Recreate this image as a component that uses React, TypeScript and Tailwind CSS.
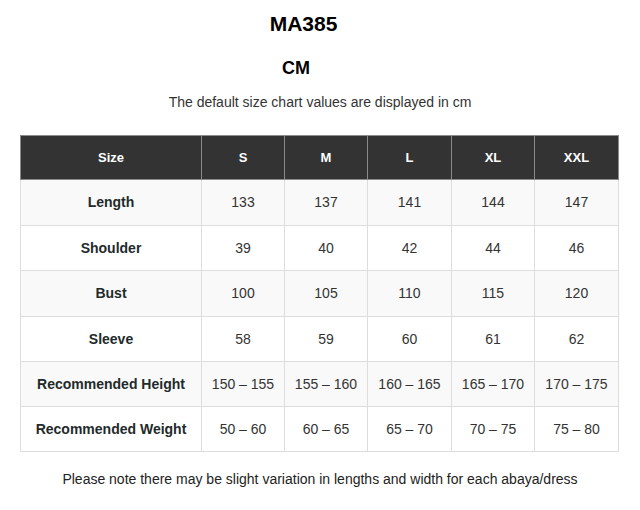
import React from "react";

const SIZES = ["S", "M", "L", "XL", "XXL"];

const ROWS = [
  { label: "Length", h: "h-[46px]", values: ["133", "137", "141", "144", "147"] },
  { label: "Shoulder", h: "h-[45px]", values: ["39", "40", "42", "44", "46"] },
  { label: "Bust", h: "h-[46px]", values: ["100", "105", "110", "115", "120"] },
  { label: "Sleeve", h: "h-[45px]", values: ["58", "59", "60", "61", "62"] },
  { label: "Recommended Height", h: "h-[45px]", values: ["150 – 155", "155 – 160", "160 – 165", "165 – 170", "170 – 175"] },
  { label: "Recommended Weight", h: "h-[45px]", values: ["50 – 60", "60 – 65", "65 – 70", "70 – 75", "75 – 80"] },
];

const COL_WIDTHS = ["w-[181px]", "w-[83px]", "w-[83px]", "w-[84px]", "w-[83px]", "w-[84px]"];

export default function App() {
  return (
    <div className="w-[640px] h-[510px] bg-white font-['Liberation_Sans',Arial,sans-serif] text-[#333]">
      <div className="pt-[10px] pr-[33px] text-center text-[21px] font-bold leading-[28px] text-black">MA385</div>
      <div className="mt-[18px] pr-[48px] text-center text-[18px] font-bold leading-[24px] text-black">CM</div>
      <div className="mt-[13px] text-center text-[14px] leading-[18px] text-[#333]">
        The default size chart values are displayed in cm
      </div>
      <div className="mt-[24px] pl-[20px]">
        <table className="border-collapse table-fixed w-[598px] text-center">
          <thead>
            <tr className="h-[44px] bg-[#333] text-white">
              <th className={`${COL_WIDTHS[0]} border border-[#8a8a8a] text-[13px] font-bold`}>Size</th>
              {SIZES.map((s, i) => (
                <th key={s} className={`${COL_WIDTHS[i + 1]} border border-[#8a8a8a] text-[13px] font-bold`}>
                  {s}
                </th>
              ))}
            </tr>
          </thead>
          <tbody>
            {ROWS.map((row, r) => (
              <tr key={row.label} className={`${row.h} ${r % 2 === 0 ? "bg-[#f9f9f9]" : "bg-white"}`}>
                <td className="border border-[#dddddd] text-[14px] font-bold text-[#1f2a2a]">{row.label}</td>
                {row.values.map((v, i) => (
                  <td key={i} className="border border-[#dddddd] text-[14px] text-[#333]">
                    {v}
                  </td>
                ))}
              </tr>
            ))}
          </tbody>
        </table>
      </div>
      <div className="mt-[18px] text-center text-[14px] leading-[18px] text-[#222]">
        Please note there may be slight variation in lengths and width for each abaya/dress
      </div>
    </div>
  );
}
